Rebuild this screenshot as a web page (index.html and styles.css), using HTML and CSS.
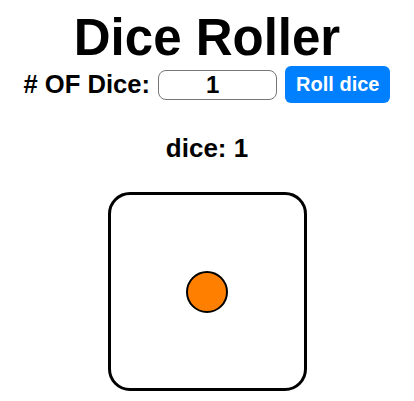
FILE: index.html
```html
<!DOCTYPE html>
<html>
<head>
<meta charset="utf-8">
<link rel="stylesheet" href="styles.css">
</head>
<body>
<main class="app">
  <h1 class="title">Dice Roller</h1>
  <div class="controls">
    <label class="label" for="count"># OF Dice:</label>
    <input class="count" id="count" type="text" value="1">
    <button class="roll">Roll dice</button>
  </div>
  <p class="summary">dice: 1</p>
  <div class="dice-area">
    <div class="die">
      <span class="pip"></span>
    </div>
  </div>
</main>
</body>
</html>
```
FILE: styles.css
```css
html, body {
  margin: 0;
  padding: 0;
  background: #fff;
}
body {
  font-family: "Liberation Sans", Arial, sans-serif;
  color: #000;
}
.app {
  display: flex;
  flex-direction: column;
  align-items: center;
}
.title {
  margin: 10px 0 0;
  font-size: 51px;
  line-height: 56px;
  font-weight: bold;
}
.controls {
  display: flex;
  align-items: center;
  gap: 8px;
  margin-top: 0;
}
.label {
  font-size: 25.6px;
  font-weight: bold;
}
.count {
  box-sizing: border-box;
  width: 119px;
  height: 30px;
  border: 1px solid #767676;
  border-radius: 8px;
  text-align: center;
  font-family: "Liberation Sans", Arial, sans-serif;
  font-size: 24px;
  font-weight: bold;
  padding: 0 10px 0 0;
}
.roll {
  box-sizing: border-box;
  height: 37px;
  padding: 0 11px;
  border: none;
  border-radius: 6px;
  background: #0080ff;
  color: #fff;
  font-family: "Liberation Sans", Arial, sans-serif;
  font-size: 20px;
  font-weight: bold;
}
.summary {
  margin: 30px 0 0;
  font-size: 26px;
  font-weight: bold;
}
.dice-area {
  margin-top: 28px;
}
.die {
  box-sizing: border-box;
  width: 199px;
  height: 199px;
  border: 3px solid #000;
  border-radius: 22px;
  display: flex;
  align-items: center;
  justify-content: center;
}
.pip {
  box-sizing: border-box;
  width: 42px;
  height: 42px;
  border: 2px solid #000;
  border-radius: 50%;
  background: #ff8000;
}
```
